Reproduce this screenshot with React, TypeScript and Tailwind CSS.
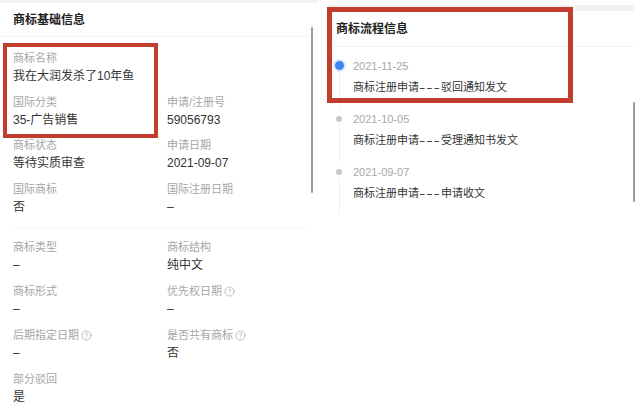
import React from 'react';
import { CircleHelp } from 'lucide-react';

type Field = { label: string; value: string; help?: boolean } | null;

const basicTop: [Field, Field][] = [
  [{ label: '商标名称', value: '我在大润发杀了10年鱼' }, null],
  [{ label: '国际分类', value: '35-广告销售' }, { label: '申请/注册号', value: '59056793' }],
  [{ label: '商标状态', value: '等待实质审查' }, { label: '申请日期', value: '2021-09-07' }],
  [{ label: '国际商标', value: '否' }, { label: '国际注册日期', value: '–' }],
];

const basicBottom: [Field, Field][] = [
  [{ label: '商标类型', value: '–' }, { label: '商标结构', value: '纯中文' }],
  [{ label: '商标形式', value: '–' }, { label: '优先权日期', value: '–', help: true }],
  [{ label: '后期指定日期', value: '–', help: true }, { label: '是否共有商标', value: '否', help: true }],
  [{ label: '部分驳回', value: '是' }, null],
];

const flow = [
  { date: '2021-11-25', text: '商标注册申请', tail: '驳回通知发文', active: true },
  { date: '2021-10-05', text: '商标注册申请', tail: '受理通知书发文', active: false },
  { date: '2021-09-07', text: '商标注册申请', tail: '申请收文', active: false },
];

const Cell = ({ field }: { field: Field }) => {
  if (!field) return <div />;
  return (
    <div>
      <div className="flex items-center gap-[2px] text-[11px] leading-[18px] text-[#a6a6a6]">
        {field.label}
        {field.help && <CircleHelp size={11} strokeWidth={1.5} className="text-[#a6a6a6]" />}
      </div>
      <div className="text-[12px] leading-[18px] text-[#333]">{field.value}</div>
    </div>
  );
};

const FieldGrid = ({ rows, rowClass }: { rows: [Field, Field][]; rowClass: string }) => (
  <div className="px-[13px]">
    {rows.map((row, i) => (
      <div key={i} className={`grid grid-cols-[154px_154px] ${rowClass}`}>
        <Cell field={row[0]} />
        <Cell field={row[1]} />
      </div>
    ))}
  </div>
);

export default function App() {
  return (
    <div className="relative flex w-[640px] h-[409px] overflow-hidden bg-white font-['Liberation_Sans','Noto_Sans_CJK_SC',sans-serif]">
      {/* Basic info panel */}
      <div className="relative w-[317px] shrink-0">
        <div className="h-[3px] bg-[#f2f2f2]" />
        <div className="h-[34px] flex items-center pl-[13px] text-[12px] font-semibold text-[#222] border-b border-[#f4f4f4]">
          商标基础信息
        </div>
        <div className="pt-[12px]">
          <FieldGrid rows={basicTop} rowClass="h-[43.5px]" />
        </div>
        <div className="mx-[13px] mt-[4px] border-t border-[#f5f5f5] w-[294px]" />
        <div className="pt-[10px]">
          <FieldGrid rows={basicBottom} rowClass="h-[44px]" />
        </div>
        <div className="absolute left-[311px] top-[27px] h-[166px] w-[2px] rounded-full bg-[#9c9c9c]" />
      </div>

      <div className="w-[11px] shrink-0" />

      {/* Flow info panel */}
      <div className="relative w-[307px] shrink-0">
        <div className="h-[5px]" />
        <div className="h-[6px] bg-[#f1f1f1]" />
        <div className="h-[36px] flex items-center pl-[8px] text-[12px] font-semibold text-[#222] border-b border-[#f4f4f4]">
          商标流程信息
        </div>
        <div className="pt-[9px] pl-[6px]">
          {flow.map((item) => (
            <div key={item.date} className="flex">
              <div className="w-[10px] flex flex-col items-center">
                {item.active ? (
                  <div className="mt-[5px] w-[9px] h-[9px] rounded-full bg-[#3d87f2] ring-2 ring-[#dbe8fc]" />
                ) : (
                  <div className="mt-[7px] w-[6px] h-[6px] rounded-full bg-[#c9c9c9]" />
                )}
                <div className="flex-1 w-px bg-[#f0f0f0] mt-[2px]" />
              </div>
              <div className="ml-[9px] pb-[12px]">
                <div className="text-[11px] leading-[20px] text-[#a8a8a8]">{item.date}</div>
                <div className="mt-[1px] flex text-[11px] leading-[20px] text-[#333]">
                  {item.text}
                  <span className="inline-block w-[22px] overflow-visible">
                    <span className="inline-block origin-left scale-x-[1.75] tracking-[0.5px]">---</span>
                  </span>
                  {item.tail}
                </div>
              </div>
            </div>
          ))}
        </div>
        <div className="absolute left-[305px] top-[102px] h-[100px] w-[2px] rounded-full bg-[#9c9c9c]" />
      </div>

      {/* Highlight boxes */}
      <div className="absolute left-[3px] top-[43px] w-[155px] h-[95px] border-[4px] border-[#c23d2e]" />
      <div className="absolute left-[327px] top-[7px] w-[246px] h-[96px] border-[5px] border-[#c23d2e]" />
    </div>
  );
}
